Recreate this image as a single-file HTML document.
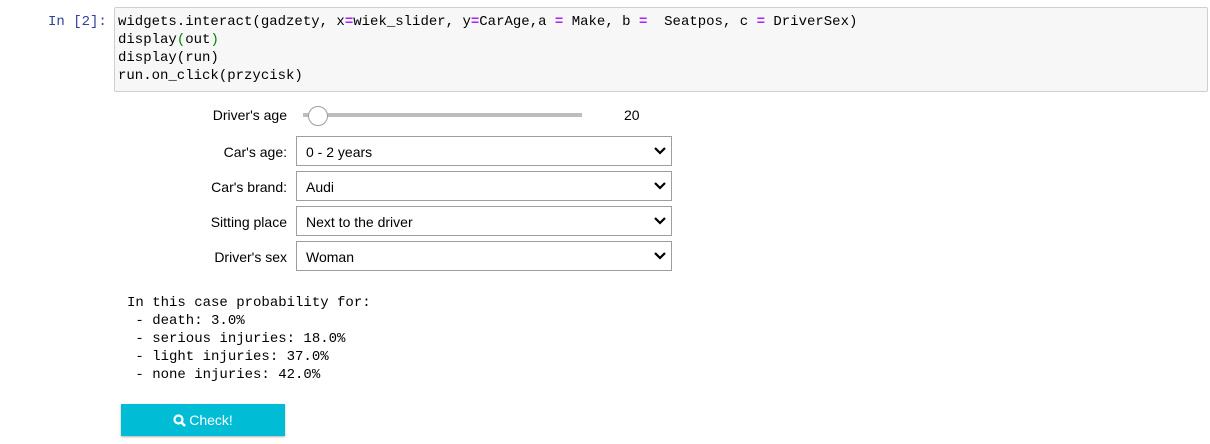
<!DOCTYPE html>
<html><head><meta charset="utf-8"><style>
body{margin:0;width:1210px;height:444px;background:#fff;position:relative;overflow:hidden;font-family:"Liberation Sans",sans-serif;}
.abs{position:absolute}
.mono{font-family:"Liberation Mono",monospace;font-size:14px;line-height:18px;white-space:pre}
.code{left:114px;top:7px;width:1092px;height:83px;background:#f7f7f7;border:1px solid #cfcfcf;border-radius:2px}
.lbl{width:287px;left:0;text-align:right;font-size:14px;color:#000}
.sel{left:296px;width:374px;height:28px;border:1px solid #9e9e9e;background:#fff;font-size:14px}
.sel span{position:absolute;left:9px;top:7px}
.sel svg{position:absolute;right:4px;top:9px}
</style></head><body>
<div class="abs mono" style="left:48px;top:13px;color:#303f9f">In [2]:</div>
<div class="abs code"></div>
<div class="abs mono" style="left:118px;top:13px;color:#000">widgets.interact(gadzety, x<b style="color:#aa22ff">=</b>wiek_slider, y<b style="color:#aa22ff">=</b>CarAge,a <b style="color:#aa22ff">=</b> Make, b <b style="color:#aa22ff">=</b>  Seatpos, c <b style="color:#aa22ff">=</b> DriverSex)
display<span style="color:#008000">(</span>out<span style="color:#008000">)</span>
display(run)
run.on_click(przycisk)</div>

<div class="abs lbl" style="top:107px">Driver's age</div>
<div class="abs" style="left:303px;top:113px;width:279px;height:4px;background:#bdbdbd"></div>
<div class="abs" style="left:308px;top:106px;width:18px;height:18px;border-radius:50%;border:1px solid #9e9e9e;background:#fff"></div>
<div class="abs" style="left:624px;top:107px;font-size:14px">20</div>

<div class="abs lbl" style="top:144px">Car's age:</div>
<div class="abs sel" style="top:136px"><span>0 - 2 years</span><svg width="14" height="10" viewBox="0 0 14 10"><path d="M2 2l5 5 5-5" stroke="#000" stroke-width="2.2" fill="none"/></svg></div>
<div class="abs lbl" style="top:179px">Car's brand:</div>
<div class="abs sel" style="top:171px"><span>Audi</span><svg width="14" height="10" viewBox="0 0 14 10"><path d="M2 2l5 5 5-5" stroke="#000" stroke-width="2.2" fill="none"/></svg></div>
<div class="abs lbl" style="top:214px">Sitting place</div>
<div class="abs sel" style="top:206px"><span>Next to the driver</span><svg width="14" height="10" viewBox="0 0 14 10"><path d="M2 2l5 5 5-5" stroke="#000" stroke-width="2.2" fill="none"/></svg></div>
<div class="abs lbl" style="top:249px">Driver's sex</div>
<div class="abs sel" style="top:241px"><span>Woman</span><svg width="14" height="10" viewBox="0 0 14 10"><path d="M2 2l5 5 5-5" stroke="#000" stroke-width="2.2" fill="none"/></svg></div>

<div class="abs mono" style="left:127px;top:294px;color:#000">In this case probability for:
 - death: 3.0%
 - serious injuries: 18.0%
 - light injuries: 37.0%
 - none injuries: 42.0%</div>

<div class="abs" style="left:121px;top:404px;width:164px;height:32px;background:#00bcd4;box-shadow:0 1px 2px rgba(0,0,0,.3);color:#fff;font-size:14px;text-align:center;line-height:32px">
<svg width="13" height="13" viewBox="0 0 13 13" style="vertical-align:-2px;margin-right:3px"><circle cx="5.5" cy="5.5" r="4" stroke="#fff" stroke-width="2.2" fill="none"/><path d="M8.5 8.5l3.5 3.5" stroke="#fff" stroke-width="2.6"/></svg>Check!</div>
</body></html>
